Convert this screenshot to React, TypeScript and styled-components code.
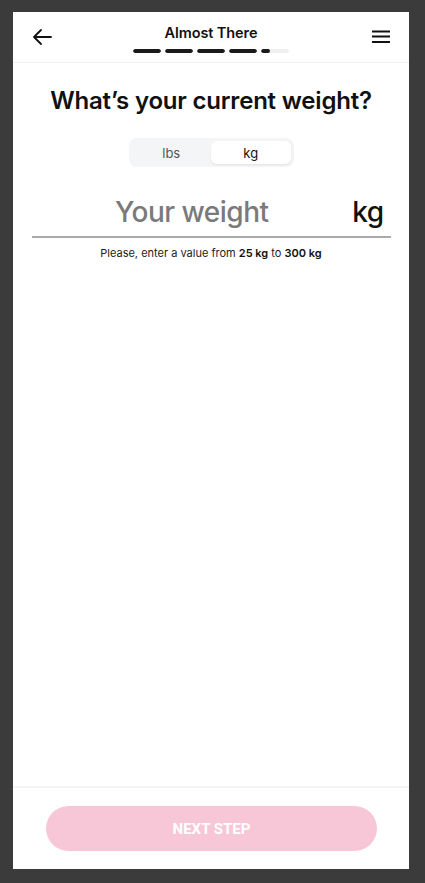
import React from "react";
import styled, { createGlobalStyle } from "styled-components";

const Global = createGlobalStyle`
  html, body { margin: 0; padding: 0; background: #3b3b3b; }
  body { padding: 12px 16px 14px 13px; font-family: "Inter", "Liberation Sans", sans-serif; }
  * { box-sizing: border-box; }
`;

const Panel = styled.div`
  width: 396px;
  height: 857px;
  background: #fff;
  display: flex;
  flex-direction: column;
`;

const Header = styled.header`
  height: 51px;
  border-bottom: 1px solid #f2f2f2;
  display: grid;
  grid-template-columns: 56px 1fr 56px;
  align-items: center;
`;

const IconBtn = styled.div<{ $align: "start" | "end" }>`
  display: flex;
  justify-content: ${(p) => (p.$align === "start" ? "flex-start" : "flex-end")};
  padding: ${(p) => (p.$align === "start" ? "0 0 0 19px" : "0 19px 0 0")};
  color: #111;
  height: 100%;
  align-items: center;
`;

const Center = styled.div`
  display: flex;
  flex-direction: column;
  align-items: center;
  padding-top: 2px;
`;

const Title = styled.div`
  font-family: "Inter", sans-serif;
  font-weight: 600;
  font-size: 14.5px;
  color: #111;
  letter-spacing: -0.1px;
  line-height: 17px;
`;

const Progress = styled.div`
  display: flex;
  gap: 4px;
  margin-top: 8px;
`;

const Seg = styled.div`
  width: 28px;
  height: 4px;
  border-radius: 2px;
  background: #f0f0f0;
  overflow: hidden;
`;

const SegFill = styled.div`
  height: 100%;
  background: #1a1a1a;
  border-radius: 2px;
`;

const Main = styled.main`
  flex: 1;
  display: flex;
  flex-direction: column;
  align-items: center;
  padding: 23px 18px 0;
`;

const Heading = styled.h1`
  margin: 0;
  font-family: "Inter", sans-serif;
  font-weight: 600;
  font-size: 24px;
  letter-spacing: -0.2px;
  color: #111;
  line-height: 30px;
`;

const Toggle = styled.div`
  margin-top: 22px;
  width: 165px;
  height: 29px;
  background: #f4f5f7;
  border-radius: 8px;
  padding: 3px;
  display: grid;
  grid-template-columns: 1fr 1fr;
`;

const ToggleOpt = styled.div<{ $active?: boolean }>`
  display: flex;
  align-items: center;
  justify-content: center;
  border-radius: 6px;
  font-size: 13px;
  font-family: "Inter", sans-serif;
  color: ${(p) => (p.$active ? "#111" : "#555")};
  background: ${(p) => (p.$active ? "#fff" : "transparent")};
  box-shadow: ${(p) => (p.$active ? "0 1px 2px rgba(0,0,0,0.08)" : "none")};
`;

const InputRow = styled.div`
  margin-top: 24px;
  width: 359px;
  border-bottom: 2px solid #aaaaaa;
  display: flex;
  align-items: center;
  height: 47px;
  padding-bottom: 4px;
`;

const Field = styled.div`
  flex: 1;
  text-align: center;
  font-size: 28px;
  font-weight: 500;
  letter-spacing: -0.5px;
  color: #7a7a7a;
`;

const Unit = styled.div`
  font-size: 28px;
  font-weight: 500;
  letter-spacing: -0.5px;
  color: #111;
  padding-right: 7px;
`;

const Hint = styled.div`
  margin-top: 8px;
  font-size: 11px;
  color: #222;
  b { font-weight: 600; color: #111; }
`;

const Footer = styled.footer`
  height: 83px;
  border-top: 2px solid #f4f4f4;
  display: flex;
  justify-content: center;
  padding-top: 18px;
`;

const NextBtn = styled.button`
  width: 331px;
  height: 45px;
  border: none;
  border-radius: 23px;
  background: #f7c7d7;
  color: #fff;
  font-family: "Roboto", sans-serif;
  font-weight: 700;
  font-size: 15px;
  margin-left: 1px;
`;

export default function App() {
  const fills = [100, 100, 100, 100, 33];
  return (
    <>
      <Global />
      <Panel>
        <Header>
          <IconBtn $align="start">
            <svg width="20" height="18" viewBox="0 0 20 18" fill="none" stroke="#111" strokeWidth="1.8" strokeLinecap="round" strokeLinejoin="round">
              <path d="M19 9H2M9 2L2 9l7 7" />
            </svg>
          </IconBtn>
          <Center>
            <Title>Almost There</Title>
            <Progress>
              {fills.map((f, i) => (
                <Seg key={i}>
                  <SegFill style={{ width: `${f}%` }} />
                </Seg>
              ))}
            </Progress>
          </Center>
          <IconBtn $align="end">
            <svg width="18" height="14" viewBox="0 0 18 14" fill="none" stroke="#111" strokeWidth="1.8">
              <path d="M0 1.5h18M0 6.5h18M0 12h18" />
            </svg>
          </IconBtn>
        </Header>
        <Main>
          <Heading>What’s your current weight?</Heading>
          <Toggle>
            <ToggleOpt>lbs</ToggleOpt>
            <ToggleOpt $active>kg</ToggleOpt>
          </Toggle>
          <InputRow>
            <Field>Your weight</Field>
            <Unit>kg</Unit>
          </InputRow>
          <Hint>
            Please, enter a value from <b>25 kg</b> to <b>300 kg</b>
          </Hint>
        </Main>
        <Footer>
          <NextBtn>NEXT STEP</NextBtn>
        </Footer>
      </Panel>
    </>
  );
}
